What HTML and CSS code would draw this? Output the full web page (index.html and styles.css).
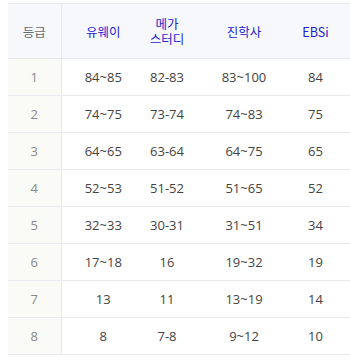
FILE: index.html
```html
<!DOCTYPE html>
<html lang="ko">
<head>
<meta charset="utf-8">
<link rel="stylesheet" href="styles.css">
</head>
<body>
<table class="grades">
  <colgroup>
    <col class="c-grade"><col class="c-uway"><col class="c-mega"><col class="c-jinhak"><col class="c-ebs">
  </colgroup>
  <thead>
    <tr>
      <th class="g">등급</th>
      <th>유웨이</th>
      <th><span class="ln">메가</span><span class="ln">스터디</span></th>
      <th>진학사</th>
      <th class="last">EBSi</th>
    </tr>
  </thead>
  <tbody>
    <tr><td class="g">1</td><td>84~85</td><td>82-83</td><td>83~100</td><td class="last">84</td></tr>
    <tr><td class="g">2</td><td>74~75</td><td>73-74</td><td>74~83</td><td class="last">75</td></tr>
    <tr><td class="g">3</td><td>64~65</td><td>63-64</td><td>64~75</td><td class="last">65</td></tr>
    <tr><td class="g">4</td><td>52~53</td><td>51-52</td><td>51~65</td><td class="last">52</td></tr>
    <tr><td class="g">5</td><td>32~33</td><td>30-31</td><td>31~51</td><td class="last">34</td></tr>
    <tr><td class="g">6</td><td>17~18</td><td>16</td><td>19~32</td><td class="last">19</td></tr>
    <tr><td class="g">7</td><td>13</td><td>11</td><td>13~19</td><td class="last">14</td></tr>
    <tr><td class="g">8</td><td>8</td><td>7-8</td><td>9~12</td><td class="last">10</td></tr>
  </tbody>
</table>
</body>
</html>
```
FILE: styles.css
```css
html, body {
  margin: 0;
  padding: 0;
  background: #ffffff;
}
body {
  padding: 3px 0 0 8px;
  font-family: "Open Sans", "Noto Sans CJK KR", sans-serif;
  font-size: 13px;
}
.grades {
  border-collapse: collapse;
  table-layout: fixed;
  width: 342px;
  border-top: 1px solid #e6e7ec;
}
.c-grade { width: 53px; }
.c-uway { width: 84px; }
.c-mega { width: 44px; }
.c-jinhak { width: 110px; }
.c-ebs { width: 51px; }
.grades th {
  height: 54px;
  padding: 0;
  background: #f7f8fb;
  font-weight: normal;
  font-family: "Noto Sans CJK KR", "Open Sans", sans-serif;
  font-size: 12.5px;
  color: #2222d8;
  line-height: 15px;
  text-align: center;
  vertical-align: middle;
  border-bottom: 1px solid #e6e7ec;
}
.grades th .ln {
  display: block;
  height: 15px;
}
.grades th.g {
  color: #666a70;
}
.grades td {
  height: 36px;
  padding: 0;
  text-align: center;
  vertical-align: middle;
  color: #444444;
  border-bottom: 1px solid #e8e9ee;
  line-height: 16px;
}
.grades .g {
  border-right: 1px solid #e8e9ee;
}
.grades td.g {
  background: #fafaf6;
  color: #8a8a8a;
}
.grades .last {
  padding-right: 18px;
}
```
